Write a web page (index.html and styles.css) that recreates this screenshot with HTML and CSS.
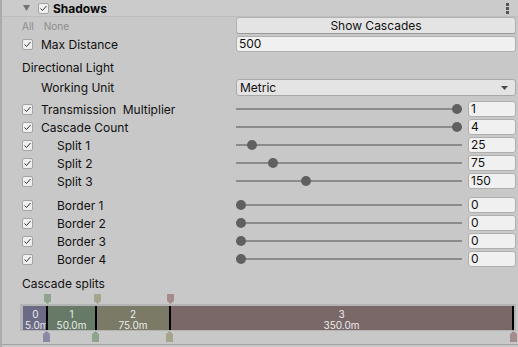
FILE: index.html
```html
<!DOCTYPE html>
<html>
<head>
<meta charset="utf-8">
<link rel="stylesheet" href="styles.css">
</head>
<body>
<div class="inspector">
  <div class="header">
    <svg class="tri" width="7" height="6" viewBox="0 0 7 6"><polygon points="0,0 7,0 3.5,6" fill="#737373"/></svg>
    <span class="cb hcb"><svg width="11" height="11" viewBox="0 0 11 11"><polyline points="2.5,5.5 4.5,7.5 8.5,3" fill="none" stroke="#333" stroke-width="1"/></svg></span>
    <span class="title">Shadows</span>
    <svg class="kebab" width="3" height="11" viewBox="0 0 3 11"><rect x="0" y="0" width="3" height="3" fill="#555"/><rect x="0" y="4" width="3" height="3" fill="#555"/><rect x="0" y="8" width="3" height="3" fill="#555"/></svg>
  </div>

  <div class="row row-top">
    <div class="lab"><span class="mini">All</span><span class="mini mini2">None</span></div>
    <div class="ctl"><div class="button">Show Cascades</div></div>
  </div>

  <div class="row">
    <div class="lab"><span class="cb"><svg width="11" height="11" viewBox="0 0 11 11"><polyline points="2.5,5.5 4.5,7.5 8.5,3" fill="none" stroke="#333"/></svg></span><span class="lbl">Max Distance</span></div>
    <div class="ctl"><div class="field">500</div></div>
  </div>

  <div class="section">Directional Light</div>

  <div class="row row-dd">
    <div class="lab"><span class="lbl nocb">Working Unit</span></div>
    <div class="ctl"><div class="dropdown"><span>Metric</span><svg width="7" height="4" viewBox="0 0 7 4"><polygon points="0,0 7,0 3.5,4" fill="#4a4a4a"/></svg></div></div>
  </div>

  <div class="row row-first">
    <div class="lab"><span class="cb"><svg width="11" height="11" viewBox="0 0 11 11"><polyline points="2.5,5.5 4.5,7.5 8.5,3" fill="none" stroke="#333"/></svg></span><span class="lbl">Transmission&nbsp; Multiplier</span></div>
    <div class="ctl sl"><div class="slider"><div class="track"></div><div class="thumb" style="left:216px"></div></div><div class="field small">1</div></div>
  </div>

  <div class="row">
    <div class="lab"><span class="cb"><svg width="11" height="11" viewBox="0 0 11 11"><polyline points="2.5,5.5 4.5,7.5 8.5,3" fill="none" stroke="#333"/></svg></span><span class="lbl">Cascade Count</span></div>
    <div class="ctl sl"><div class="slider"><div class="track"></div><div class="thumb" style="left:216px"></div></div><div class="field small">4</div></div>
  </div>

  <div class="row">
    <div class="lab"><span class="cb"><svg width="11" height="11" viewBox="0 0 11 11"><polyline points="2.5,5.5 4.5,7.5 8.5,3" fill="none" stroke="#333"/></svg></span><span class="lbl ind">Split 1</span></div>
    <div class="ctl sl"><div class="slider"><div class="track"></div><div class="thumb" style="left:11px"></div></div><div class="field small">25</div></div>
  </div>

  <div class="row">
    <div class="lab"><span class="cb"><svg width="11" height="11" viewBox="0 0 11 11"><polyline points="2.5,5.5 4.5,7.5 8.5,3" fill="none" stroke="#333"/></svg></span><span class="lbl ind">Split 2</span></div>
    <div class="ctl sl"><div class="slider"><div class="track"></div><div class="thumb" style="left:32px"></div></div><div class="field small">75</div></div>
  </div>

  <div class="row">
    <div class="lab"><span class="cb"><svg width="11" height="11" viewBox="0 0 11 11"><polyline points="2.5,5.5 4.5,7.5 8.5,3" fill="none" stroke="#333"/></svg></span><span class="lbl ind">Split 3</span></div>
    <div class="ctl sl"><div class="slider"><div class="track"></div><div class="thumb" style="left:65px"></div></div><div class="field small">150</div></div>
  </div>

  <div class="row row-gap">
    <div class="lab"><span class="cb"><svg width="11" height="11" viewBox="0 0 11 11"><polyline points="2.5,5.5 4.5,7.5 8.5,3" fill="none" stroke="#333"/></svg></span><span class="lbl ind">Border 1</span></div>
    <div class="ctl sl"><div class="slider"><div class="track"></div><div class="thumb" style="left:0px"></div></div><div class="field small">0</div></div>
  </div>

  <div class="row">
    <div class="lab"><span class="cb"><svg width="11" height="11" viewBox="0 0 11 11"><polyline points="2.5,5.5 4.5,7.5 8.5,3" fill="none" stroke="#333"/></svg></span><span class="lbl ind">Border 2</span></div>
    <div class="ctl sl"><div class="slider"><div class="track"></div><div class="thumb" style="left:0px"></div></div><div class="field small">0</div></div>
  </div>

  <div class="row">
    <div class="lab"><span class="cb"><svg width="11" height="11" viewBox="0 0 11 11"><polyline points="2.5,5.5 4.5,7.5 8.5,3" fill="none" stroke="#333"/></svg></span><span class="lbl ind">Border 3</span></div>
    <div class="ctl sl"><div class="slider"><div class="track"></div><div class="thumb" style="left:0px"></div></div><div class="field small">0</div></div>
  </div>

  <div class="row">
    <div class="lab"><span class="cb"><svg width="11" height="11" viewBox="0 0 11 11"><polyline points="2.5,5.5 4.5,7.5 8.5,3" fill="none" stroke="#333"/></svg></span><span class="lbl ind">Border 4</span></div>
    <div class="ctl sl"><div class="slider"><div class="track"></div><div class="thumb" style="left:0px"></div></div><div class="field small">0</div></div>
  </div>

  <div class="splits-label">Cascade splits</div>

  <div class="splits">
    <svg class="handle top" style="left:42px" width="7" height="10" viewBox="0 0 7 10"><polygon points="0,0 7,0 7,7 3.5,10 0,7" fill="#8ea48e"/></svg>
    <svg class="handle top" style="left:92px" width="7" height="10" viewBox="0 0 7 10"><polygon points="0,0 7,0 7,7 3.5,10 0,7" fill="#a4a48c"/></svg>
    <svg class="handle top" style="left:165px" width="7" height="10" viewBox="0 0 7 10"><polygon points="0,0 7,0 7,7 3.5,10 0,7" fill="#a48c8c"/></svg>

    <div class="bar">
      <div class="seg s0"><span>0</span><span>5.0m</span></div>
      <div class="seg s1"><span>1</span><span>50.0m</span></div>
      <div class="seg s2"><span>2</span><span>75.0m</span></div>
      <div class="seg s3"><span>3</span><span>350.0m</span></div>
    </div>

    <svg class="handle bot" style="left:41px" width="7" height="11" viewBox="0 0 7 11"><polygon points="3.5,0 7,3 7,11 0,11 0,3" fill="#8a8aa6"/></svg>
    <svg class="handle bot" style="left:90px" width="7" height="11" viewBox="0 0 7 11"><polygon points="3.5,0 7,3 7,11 0,11 0,3" fill="#8ea48e"/></svg>
    <svg class="handle bot" style="left:164px" width="7" height="11" viewBox="0 0 7 11"><polygon points="3.5,0 7,3 7,11 0,11 0,3" fill="#a4a48c"/></svg>
    <svg class="handle bot" style="left:508px" width="7" height="11" viewBox="0 0 7 11"><polygon points="3.5,0 7,3 7,11 0,11 0,3" fill="#a48c8c"/></svg>
  </div>
</div>
</body>
</html>
```

FILE: styles.css
```css
* { box-sizing: border-box; }
html, body {
  margin: 0;
  padding: 0;
  background: #c8c8c8;
  width: 518px;
  height: 347px;
  overflow: hidden;
}
body {
  font-family: Inter, "Noto Sans", "Liberation Sans", sans-serif;
  font-size: 12px;
  color: #111;
}
.inspector {
  border-left: 2px solid #ababab;
  height: 347px;
}
.header {
  height: 17px;
  display: flex;
  align-items: center;
  padding-left: 21px;
  background: #cbcbcb;
  border-bottom: 1px solid #bdbdbd;
}
.tri { display: block; }
.cb {
  width: 11px;
  height: 11px;
  border: 1px solid #a3a3a3;
  border-radius: 2px;
  background: #efefef;
  display: block;
  position: relative;
  flex: none;
}
.cb svg { display: block; margin: -1px; }
.hcb { margin-left: 8px; }
.title {
  font-weight: 700;
  margin-left: 4px;
  color: #0a0a0a;
}
.kebab { margin-left: auto; margin-right: 9px; display: block; }

.row {
  display: flex;
  height: 16px;
  margin-top: 2px;
  align-items: center;
}
.row-top { height: 17px; margin-top: 0; }
.row-dd { height: 17px; margin-top: 2px; }
.row-first { margin-top: 5px; }
.row-gap { margin-top: 8px; }
.lab {
  width: 234px;
  flex: none;
  display: flex;
  align-items: center;
  padding-left: 20px;
  white-space: nowrap;
}
.lbl { margin-left: 8px; }
.lbl.nocb { margin-left: 19px; }
.lbl.ind { margin-left: 24px; }
.mini {
  font-size: 10px;
  color: #8c8c8c;
}
.mini2 { margin-left: 10px; }
.ctl {
  flex: 1;
  height: 100%;
  padding-right: 2px;
  display: flex;
  align-items: stretch;
}
.ctl.sl { gap: 6px; }
.button {
  flex: 1;
  background: #e4e4e4;
  border: 1px solid #b1b1b1;
  border-bottom-color: #9a9a9a;
  border-radius: 3px;
  text-align: center;
  line-height: 15px;
}
.field {
  flex: 1;
  background: #f0f0f0;
  border: 1px solid #afafaf;
  border-radius: 3px;
  padding-left: 2px;
  line-height: 14px;
}
.field.small { flex: none; width: 48px; }
.dropdown {
  flex: 1;
  background: #e4e4e4;
  border: 1px solid #a9a9a9;
  border-radius: 3px;
  display: flex;
  align-items: center;
  justify-content: space-between;
  padding: 0 7px 0 3px;
}
.section {
  height: 18px;
  line-height: 18px;
  margin-top: 7px;
  padding-left: 20px;
}
.slider {
  flex: 1;
  position: relative;
}
.track {
  position: absolute;
  left: 0;
  right: 0;
  top: 7px;
  height: 2px;
  background: #8b8b8b;
}
.thumb {
  position: absolute;
  top: 3px;
  width: 10px;
  height: 10px;
  border-radius: 50%;
  background: #606060;
}
.splits-label {
  height: 18px;
  line-height: 18px;
  margin-top: 8px;
  padding-left: 20px;
}
.splits {
  position: relative;
  margin-top: 1px;
  padding-top: 10px;
  padding-bottom: 13px;
  border-bottom: 1px solid #a2a2a2;
}
.bar {
  margin-left: 18px;
  width: 496px;
  height: 27px;
  padding: 2px 2px 1px 3px;
  background: #b4b4b4;
  display: flex;
}
.seg {
  height: 24px;
  border-right: 2px solid #000;
  overflow: hidden;
  display: flex;
  flex-direction: column;
  align-items: center;
  padding-top: 3px;
  color: #ececec;
  font-size: 10px;
  line-height: 11px;
  white-space: nowrap;
}
.s0 { width: 25px; background: #6b6b85; align-items: flex-start; padding-left: 2px; }
.s0 span:first-child { align-self: center; }
.s1 { width: 49px; background: #677a67; }
.s2 { width: 74px; background: #7a7a67; }
.s3 { width: 343px; background: #7a6767; }
.handle { position: absolute; display: block; }
.handle.top { top: 0; }
.handle.bot { top: 37px; }
```
